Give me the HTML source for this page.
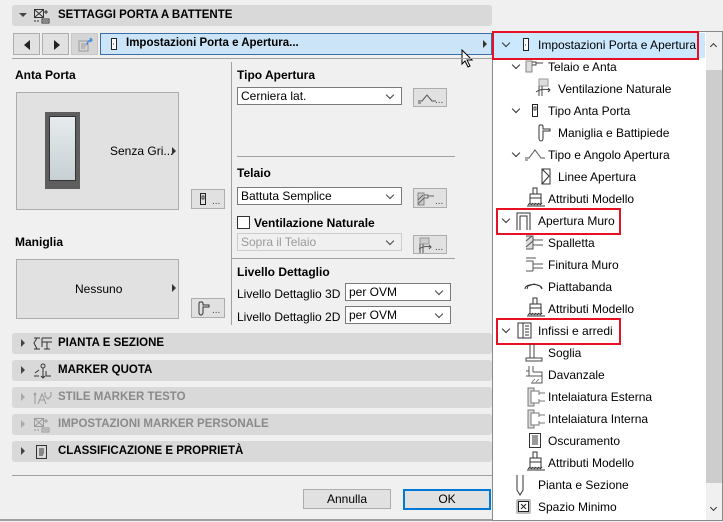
<!DOCTYPE html>
<html><head><meta charset="utf-8"><style>
*{box-sizing:border-box;margin:0;padding:0}
body{width:723px;height:522px;overflow:hidden;background:#f0f0f0;font-family:"Liberation Sans",sans-serif;font-size:12px;color:#000;position:relative}
.a{position:absolute}
.bar{position:absolute;left:12px;width:480px;height:21px;background:#d9d9d9;border-radius:3px}
.bar .t{position:absolute;left:46px;top:4px;font-weight:bold;font-size:11.5px}
.bar .tri{position:absolute;left:9px;top:6px;width:0;height:0;border-top:4px solid transparent;border-bottom:4px solid transparent;border-left:4px solid #444}
.dis .t{color:#8a8a8a}.dis .tri{border-left-color:#aaa}
.btn{position:absolute;background:#e1e1e1;border:1px solid #adadad}
.sel{position:absolute;background:#fff;border:1px solid #7a7a7a;height:18px;padding-left:3px;line-height:16px}
.sel:after{content:"";position:absolute;right:8px;top:4px;width:5px;height:5px;border-right:1px solid #444;border-bottom:1px solid #444;transform:rotate(45deg)}
.b{font-weight:bold}
.it{position:absolute;font-size:12px;white-space:nowrap}
.chev{position:absolute;width:6px;height:6px;border-right:1.5px solid #333;border-bottom:1.5px solid #333;transform:rotate(45deg)}
.red{position:absolute;border:2px solid #e81123}
.dots{position:absolute;font-size:10px;color:#444}
</style></head><body>
<!-- header -->
<div class="bar" style="top:5px"><div class="a" style="left:7px;top:8px;border-left:4px solid transparent;border-right:4px solid transparent;border-top:4px solid #444;width:0;height:0"></div>
<svg class="a" style="left:21px;top:3px" width="18" height="16"><rect x="1.5" y="1.5" width="9" height="8" fill="none" stroke="#333"/><path d="M2 2l8 7M10 2l-8 7M13 2v4M11 4h4M9 11h7v4H9zM10 13h5M1 13h2M4 13h2" stroke="#333" fill="none"/></svg>
<div class="t">SETTAGGI PORTA A BATTENTE</div></div>
<!-- nav -->
<div class="btn" style="left:13px;top:33px;width:27px;height:22px"><div class="a" style="left:10px;top:6px;border-top:5px solid transparent;border-bottom:5px solid transparent;border-right:6px solid #222"></div></div>
<div class="btn" style="left:42px;top:33px;width:27px;height:22px"><div class="a" style="left:11px;top:6px;border-top:5px solid transparent;border-bottom:5px solid transparent;border-left:6px solid #222"></div></div>
<div class="btn" style="left:71px;top:33px;width:27px;height:22px;background:#d5d5d5;border-color:#c8c8c8"><svg class="a" style="left:5px;top:3px" width="18" height="15"><rect x="2" y="4" width="9" height="10" fill="none" stroke="#999"/><path d="M4 7h5M4 9h5M4 11h4" stroke="#999"/><path d="M10 8c0-3 2-5 5-5M13 1l2 2-2 2" stroke="#4a8fd8" stroke-width="1.5" fill="none"/></svg></div>
<div class="a" style="left:100px;top:33px;width:392px;height:22px;background:#cce4f7;border:1px solid #3b6ea5"><svg class="a" style="left:9px;top:3px" width="8" height="14"><rect x="1.5" y="1.5" width="5" height="11" fill="#fff" stroke="#222"/><path d="M3 7h1" stroke="#222"/></svg><div class="a b" style="left:25px;top:3px;font-size:11.5px">Impostazioni Porta e Apertura...</div><div class="a" style="left:382px;top:6px;border-top:4px solid transparent;border-bottom:4px solid transparent;border-left:4px solid #333"></div></div>
<svg class="a" style="left:461px;top:49px" width="14" height="20"><path d="M1 1v14l3-3 3 6 2-1-3-6h5z" fill="#fff" stroke="#000"/></svg>
<div class="a" style="left:12px;top:58px;width:480px;height:1px;background:#a0a0a0"></div>
<div class="a" style="left:231px;top:62px;width:1px;height:263px;background:#a0a0a0"></div>
<!-- left -->
<div class="a b" style="left:15px;top:68px">Anta Porta</div>
<div class="a" style="left:16px;top:92px;width:163px;height:118px;background:#e1e1e1;border:1px solid #adadad"></div>
<div class="a" style="left:45px;top:112px;width:35px;height:77px;background:#5e5e5e"></div>
<div class="a" style="left:49px;top:116px;width:27px;height:65px;background:linear-gradient(#e6ecee,#c7d0d4);border:1px solid #333"></div>
<div class="a" style="left:110px;top:144px">Senza Gri...</div>
<div class="a" style="left:172px;top:147px;border-top:4px solid transparent;border-bottom:4px solid transparent;border-left:4px solid #333"></div>
<div class="btn" style="left:191px;top:189px;width:34px;height:20px"><svg class="a" style="left:7px;top:2px" width="8" height="14"><rect x="1.5" y="1.5" width="5" height="11" fill="none" stroke="#222"/><rect x="3" y="4" width="2" height="3" fill="none" stroke="#222" stroke-width=".8"/></svg><span class="dots" style="left:20px;top:6px">...</span></div>
<div class="a b" style="left:15px;top:235px">Maniglia</div>
<div class="a" style="left:16px;top:259px;width:163px;height:60px;background:#e1e1e1;border:1px solid #adadad"></div>
<div class="a" style="left:75px;top:282px">Nessuno</div>
<div class="a" style="left:172px;top:284px;border-top:4px solid transparent;border-bottom:4px solid transparent;border-left:4px solid #333"></div>
<div class="btn" style="left:191px;top:298px;width:34px;height:20px"><svg class="a" style="left:5px;top:2px" width="14" height="15"><path d="M3 1h2c1 0 1 1 1 2v1h6v2H6v6c0 1-1 2-2 2s-2-1-2-2V3c0-1 0-2 1-2z" fill="none" stroke="#333"/></svg><span class="dots" style="left:20px;top:6px">...</span></div>
<!-- right column -->
<div class="a b" style="left:237px;top:68px">Tipo Apertura</div>
<div class="sel" style="left:237px;top:87px;width:165px">Cerniera lat.</div>
<div class="btn" style="left:413px;top:88px;width:34px;height:19px"><svg class="a" style="left:3px;top:3px" width="20" height="12"><path d="M1 9h4l5-6 5 6h4M1 11h3" stroke="#555" fill="none"/></svg><span class="dots" style="left:21px;top:6px">...</span></div>
<div class="a" style="left:237px;top:156px;width:218px;height:1px;background:#a0a0a0"></div>
<div class="a b" style="left:237px;top:166px">Telaio</div>
<div class="sel" style="left:237px;top:187px;width:165px">Battuta Semplice</div>
<div class="btn" style="left:413px;top:188px;width:34px;height:20px"><svg class="a" style="left:3px;top:3px" width="20" height="14"><path d="M1 1h6v12H1z" fill="#ccc" stroke="#888"/><path d="M7 3h4v3H7M11 4h6M1 8l5-5M1 12l6-6" stroke="#666" fill="none"/></svg><span class="dots" style="left:21px;top:7px">...</span></div>
<div class="a" style="left:237px;top:216px;width:13px;height:13px;background:#fff;border:1px solid #333"></div>
<div class="a b" style="left:254px;top:216px">Ventilazione Naturale</div>
<div class="sel" style="left:237px;top:233px;width:165px;background:#f0f0f0;border-color:#ccc;color:#9a9a9a">Sopra il Telaio</div>
<div class="btn" style="left:413px;top:235px;width:34px;height:19px"><svg class="a" style="left:3px;top:1px" width="20" height="17"><path d="M3 1h9v6H3z" fill="#ccc" stroke="#999"/><path d="M3 7v9M6 7v9M2 12c4-3 8-3 12-2M12 8l2 2-2 2" stroke="#555" fill="none"/></svg><span class="dots" style="left:21px;top:6px">...</span></div>
<div class="a" style="left:232px;top:258px;width:223px;height:1px;background:#a0a0a0"></div>
<div class="a b" style="left:237px;top:265px">Livello Dettaglio</div>
<div class="a" style="left:237px;top:287px">Livello Dettaglio 3D</div>
<div class="sel" style="left:345px;top:283px;width:106px">per OVM</div>
<div class="a" style="left:237px;top:310px">Livello Dettaglio 2D</div>
<div class="sel" style="left:345px;top:306px;width:106px">per OVM</div>
<!-- sections -->
<div class="bar" style="top:333px"><div class="tri"></div><svg class="a" style="left:21px;top:3px" width="20" height="15"><path d="M1 2h6M1 13h6M4 2l-3 5 3 6M9 2h10M9 6h10M9 2v9M14 6v7M11 13h6" stroke="#333" fill="none"/></svg><div class="t">PIANTA E SEZIONE</div></div>
<div class="bar" style="top:360px"><div class="tri"></div><svg class="a" style="left:21px;top:3px" width="20" height="16"><circle cx="10" cy="3" r="2" fill="none" stroke="#333"/><path d="M10 5v10M8 13l2 2 2-2M2 10l4-3M13 8v5h5M1 13h5" stroke="#333" fill="none"/></svg><div class="t">MARKER QUOTA</div></div>
<div class="bar dis" style="top:387px"><div class="tri"></div><svg class="a" style="left:21px;top:3px" width="20" height="16"><path d="M2 3v11M1 5l1-2 1 2M5 14l4-10 4 10M6 10h6M12 2v4l3 3 3-3V2" stroke="#999" fill="none"/></svg><div class="t">STILE MARKER TESTO</div></div>
<div class="bar dis" style="top:414px"><div class="tri"></div><svg class="a" style="left:21px;top:3px" width="18" height="16"><rect x="1.5" y="1.5" width="9" height="8" fill="none" stroke="#999"/><path d="M2 2l8 7M10 2l-8 7M13 2v4M11 4h4M9 11h7v4H9zM10 13h5M1 13h2M4 13h2" stroke="#999" fill="none"/></svg><div class="t">IMPOSTAZIONI MARKER PERSONALE</div></div>
<div class="bar" style="top:441px"><div class="tri"></div><svg class="a" style="left:23px;top:3px" width="14" height="16"><rect x="1.5" y="1.5" width="10" height="13" fill="none" stroke="#333"/><path d="M4 5h5M4 7h5M4 9h5M4 11h4" stroke="#333"/></svg><div class="t">CLASSIFICAZIONE E PROPRIETÀ</div></div>
<div class="a" style="left:12px;top:475px;width:480px;height:1px;background:#a0a0a0"></div>
<div class="btn" style="left:303px;top:489px;width:88px;height:20px;text-align:center;line-height:18px">Annulla</div>
<div class="btn" style="left:403px;top:489px;width:88px;height:21px;border:2px solid #0078d7;text-align:center;line-height:17px">OK</div>
<div class="a" style="left:0;top:519px;width:492px;height:2px;background:#a0a0a0"></div>
<!-- popup -->
<div class="a" style="left:492px;top:31px;width:231px;height:490px;background:#fff;border:1px solid #8a8a8a"></div>
<div class="a" style="left:706px;top:32px;width:16px;height:488px;background:#f0f0f0"></div>
<div class="a" style="left:706px;top:70px;width:16px;height:413px;background:#cdcdcd"></div>
<div class="chev" style="left:711px;top:44px;transform:rotate(225deg);width:5px;height:5px;border-width:1px"></div>
<div class="chev" style="left:711px;top:505px;width:5px;height:5px;border-width:1px"></div>
<div class="a" style="left:494px;top:33px;width:211px;height:25px;background:#cce8ff"></div>
<div class="red" style="left:492px;top:31px;width:207px;height:29px"></div>
<div class="red" style="left:496px;top:208px;width:125px;height:27px"></div>
<div class="red" style="left:496px;top:318px;width:125px;height:27px"></div>
<!-- items -->
<div class="chev" style="left:503px;top:40px"></div>
<svg class="a" style="left:522px;top:37px" width="8" height="15"><rect x="1.5" y="1.5" width="5" height="12" fill="#fff" stroke="#222"/><path d="M3 8h1" stroke="#222"/></svg>
<div class="it" style="left:538px;top:38px">Impostazioni Porta e Apertura</div>
<div class="chev" style="left:513px;top:62px"></div>
<svg class="a" style="left:525px;top:60px" width="20" height="13"><path d="M1 1h6v11H1z" fill="#ddd" stroke="#888"/><path d="M7 2h4v3H7M11 3h7" stroke="#444" fill="none"/></svg>
<div class="it" style="left:548px;top:60px">Telaio e Anta</div>
<svg class="a" style="left:534px;top:78px" width="20" height="19"><path d="M5 1h9v7H5z" fill="#ddd" stroke="#999"/><path d="M5 8v10M8 8v10M2 14c4-3 9-3 14-2M14 10l2 2-2 2" stroke="#444" fill="none"/></svg>
<div class="it" style="left:558px;top:82px">Ventilazione Naturale</div>
<div class="chev" style="left:513px;top:106px"></div>
<svg class="a" style="left:531px;top:103px" width="8" height="15"><rect x="1.5" y="1.5" width="5" height="12" fill="none" stroke="#222"/><rect x="3" y="4" width="2" height="3" fill="none" stroke="#222" stroke-width=".8"/></svg>
<div class="it" style="left:548px;top:104px">Tipo Anta Porta</div>
<svg class="a" style="left:537px;top:124px" width="16" height="18"><path d="M3 1h2c1 0 1 1 1 2v2h7v2H6v7c0 2-1 3-2 3s-2-1-2-3V3c0-1 0-2 1-2z" fill="none" stroke="#333"/></svg>
<div class="it" style="left:558px;top:126px">Maniglia e Battipiede</div>
<div class="chev" style="left:513px;top:150px"></div>
<svg class="a" style="left:524px;top:147px" width="22" height="14"><path d="M1 11h4l6-8 6 8h4M1 13h3" stroke="#555" fill="none"/></svg>
<div class="it" style="left:548px;top:148px">Tipo e Angolo Apertura</div>
<svg class="a" style="left:540px;top:168px" width="12" height="17"><path d="M2 1h8v15H2zM2 1l7 7-7 8" fill="none" stroke="#333"/></svg>
<div class="it" style="left:558px;top:170px">Linee Apertura</div>
<svg class="a" style="left:526px;top:187px" width="20" height="20"><path d="M7 1h4v6H7zM4 7h11v10H4zM4 11h11" fill="#fff" stroke="#333"/><path d="M2 18l2-2M5 18l2-2M8 18l2-2M11 18l2-2M14 18l2-2M1 19h18" stroke="#333"/></svg>
<div class="it" style="left:548px;top:192px">Attributi Modello</div>
<div class="chev" style="left:503px;top:216px"></div>
<svg class="a" style="left:516px;top:212px" width="16" height="19"><path d="M1 18V1h13v17M4 18V4h7v14" fill="none" stroke="#333"/></svg>
<div class="it" style="left:538px;top:214px">Apertura Muro</div>
<svg class="a" style="left:525px;top:235px" width="20" height="15"><path d="M1 1h7v13H1" fill="#ddd" stroke="#555"/><path d="M1 6l6-5M1 12l7-6M8 5h10M8 10h10" stroke="#555" fill="none"/></svg>
<div class="it" style="left:548px;top:236px">Spalletta</div>
<svg class="a" style="left:525px;top:257px" width="20" height="15"><path d="M1 1h10M1 4h7v10M8 7h10M8 11h10M1 14h7" stroke="#555" fill="none"/></svg>
<div class="it" style="left:548px;top:258px">Finitura Muro</div>
<svg class="a" style="left:524px;top:281px" width="20" height="10"><path d="M1 8c0-6 17-6 17 0M3 8l1-3 3-1 3-1 3 1 3 1 2 3" fill="none" stroke="#333"/></svg>
<div class="it" style="left:548px;top:280px">Piattabanda</div>
<svg class="a" style="left:526px;top:297px" width="20" height="20"><path d="M7 1h4v6H7zM4 7h11v10H4zM4 11h11" fill="#fff" stroke="#333"/><path d="M2 18l2-2M5 18l2-2M8 18l2-2M11 18l2-2M14 18l2-2M1 19h18" stroke="#333"/></svg>
<div class="it" style="left:548px;top:302px">Attributi Modello</div>
<div class="chev" style="left:503px;top:326px"></div>
<svg class="a" style="left:517px;top:322px" width="16" height="17"><path d="M1 1h13v15H1zM6 1v15M8 4h4M8 7h4M8 10h4M8 13h4" fill="none" stroke="#333"/></svg>
<div class="it" style="left:538px;top:324px">Infissi e arredi</div>
<svg class="a" style="left:524px;top:343px" width="20" height="19"><path d="M6 1v14M10 1v14M2 15h16v3H2z" fill="none" stroke="#444"/></svg>
<div class="it" style="left:548px;top:346px">Soglia</div>
<svg class="a" style="left:524px;top:365px" width="20" height="20"><path d="M5 1v10M9 1v6M2 6h3M9 7h9v4M2 11h16v7H7" fill="none" stroke="#555"/><path d="M8 17l3-3M12 17l3-3" stroke="#888"/></svg>
<div class="it" style="left:548px;top:368px">Davanzale</div>
<svg class="a" style="left:524px;top:387px" width="22" height="20"><path d="M4 1h6v3H7v12h3v3H4z" fill="#ddd" stroke="#777"/><path d="M10 4h5v4M15 6h6M10 16h5v-4M15 14h6" fill="none" stroke="#777"/></svg>
<div class="it" style="left:548px;top:390px">Intelaiatura Esterna</div>
<svg class="a" style="left:524px;top:409px" width="22" height="20"><path d="M4 1h6v3H7v12h3v3H4z" fill="#ddd" stroke="#777"/><path d="M10 4h5v4M15 6h6M10 16h5v-4M15 14h6" fill="none" stroke="#777"/></svg>
<div class="it" style="left:548px;top:412px">Intelaiatura Interna</div>
<svg class="a" style="left:528px;top:432px" width="14" height="17"><rect x="1.5" y="1.5" width="11" height="14" fill="none" stroke="#333"/><path d="M4 4h6M4 6h6M4 8h6M4 10h6M4 12h6" stroke="#333"/></svg>
<div class="it" style="left:548px;top:434px">Oscuramento</div>
<svg class="a" style="left:526px;top:451px" width="20" height="20"><path d="M7 1h4v6H7zM4 7h11v10H4zM4 11h11" fill="#fff" stroke="#333"/><path d="M2 18l2-2M5 18l2-2M8 18l2-2M11 18l2-2M14 18l2-2M1 19h18" stroke="#333"/></svg>
<div class="it" style="left:548px;top:456px">Attributi Modello</div>
<svg class="a" style="left:515px;top:474px" width="10" height="22"><path d="M2 1v15l3 5 3-5V1" fill="none" stroke="#333"/></svg>
<div class="it" style="left:538px;top:478px">Pianta e Sezione</div>
<div class="a" style="left:516px;top:499px;width:15px;height:15px;background:#bdbdbd;border-radius:2px"></div>
<svg class="a" style="left:518px;top:501px" width="11" height="11"><rect x=".5" y=".5" width="10" height="10" fill="#fff" stroke="#222"/><path d="M3 3l5 5M8 3l-5 5" stroke="#222"/></svg>
<div class="it" style="left:538px;top:500px">Spazio Minimo</div>
</body></html>
